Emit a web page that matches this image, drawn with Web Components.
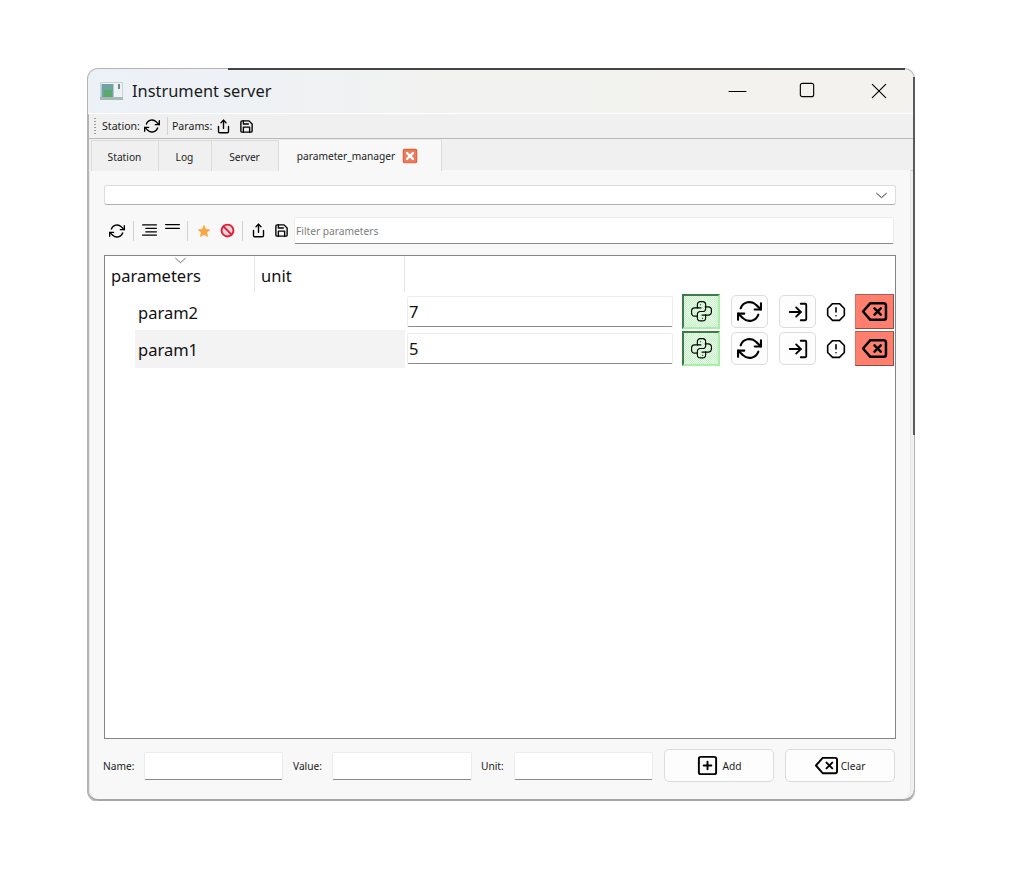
<!DOCTYPE html>
<html>
<head>
<meta charset="utf-8">
<title>Instrument server</title>
<style>
    html, body { margin: 0; background: #fff; }
    body { font-family: "Noto Sans", "Open Sans", sans-serif; padding: 69px 0 0 88px; }
</style>
</head>
<body>
<server-window></server-window>

<script>
(function () {

    const ICONS = {
        refresh: '<polyline points="23 4 23 10 17 10"/><polyline points="1 20 1 14 7 14"/><path d="M3.51 9a9 9 0 0 1 14.85-3.36L23 10M1 14l4.64 4.36A9 9 0 0 0 20.49 15"/>',
        share: '<path d="M4 12v8a2 2 0 0 0 2 2h12a2 2 0 0 0 2-2v-8"/><polyline points="16 6 12 2 8 6"/><line x1="12" y1="2" x2="12" y2="15"/>',
        save: '<path d="M19 21H5a2 2 0 0 1-2-2V5a2 2 0 0 1 2-2h11l5 5v11a2 2 0 0 1-2 2z"/><polyline points="17 21 17 13 7 13 7 21"/><polyline points="7 3 7 8 15 8"/>',
        login: '<path d="M15 3h5a1 1 0 0 1 1 1v16a1 1 0 0 1-1 1h-5"/><polyline points="10 17 15 12 10 7"/><line x1="15" y1="12" x2="3" y2="12"/>',
        alert: '<polygon points="7.86 2 16.14 2 22 7.86 22 16.14 16.14 22 7.86 22 2 16.14 2 7.86"/><line x1="12" y1="7" x2="12" y2="12"/><line x1="12" y1="16.5" x2="12.01" y2="16.5"/>',
        backspace: '<path d="M21 4H8l-7 8 7 8h13a2 2 0 0 0 2-2V6a2 2 0 0 0-2-2z"/><line x1="18" y1="9" x2="12" y2="15"/><line x1="12" y1="9" x2="18" y2="15"/>',
        plus: '<rect x="3" y="3" width="18" height="18" rx="2"/><line x1="12" y1="8" x2="12" y2="16"/><line x1="8" y1="12" x2="16" y2="12"/>',
        python: '<path d="M8.500 8.500H5.500A3 3 0 0 0 2.500 11.500v2A3 3 0 0 0 5.500 16.500h2.500"/><path d="M11.500 8.500H8.500"/><path d="M15.500 7.500h3a3 3 0 0 1 3 3v2a3 3 0 0 1-3 3h-6"/><path d="M8 8.500V5.500A3 3 0 0 1 11 2.500h2A3 3 0 0 1 16 5.500v3.500a3 3 0 0 1-3 3h-2a3 3 0 0 0-3 3v3a3 3 0 0 0 3 3h2a3 3 0 0 0 3-3v-3"/><path d="M11 5.500v.01"/><path d="M13 18.500v.01"/>',
        expand: '<line x1="1" y1="3" x2="23" y2="3"/><line x1="6" y1="8.500" x2="23" y2="8.500"/><line x1="6" y1="14" x2="23" y2="14"/><line x1="1" y1="19.500" x2="23" y2="19.500"/>',
        collapse: '<line x1="1" y1="4" x2="23" y2="4"/><line x1="1" y1="10" x2="23" y2="10"/>',
        chevron: '<polyline points="3 8 12 16 21 8"/>',
        close: '<line x1="2" y1="2" x2="22" y2="22"/><line x1="22" y1="2" x2="2" y2="22"/>',
        minimize: '<line x1="0" y1="12" x2="24" y2="12"/>',
        maximize: '<rect x="2" y="2" width="20" height="20" rx="3"/>',
        star: '<polygon fill="#f9a63f" stroke="#f9a63f" stroke-width="1" points="12 2.500 15 9 22 9.800 16.800 14.500 18.200 21.500 12 18 5.800 21.500 7.200 14.500 2 9.800 9 9"/>',
        forbid: '<circle cx="12" cy="12" r="9.500" fill="#d5d9e2" stroke="#f0182c" stroke-width="3"/><line x1="5.500" y1="5.500" x2="18.500" y2="18.500" stroke="#f0182c" stroke-width="3"/>',
        tabclose: '<rect x="0.500" y="0.500" width="23" height="23" rx="2" fill="#f0795a" stroke="#d9603f"/><line x1="7" y1="7" x2="17" y2="17" stroke="#fff" stroke-width="4"/><line x1="17" y1="7" x2="7" y2="17" stroke="#fff" stroke-width="4"/>'
    };

    class AppIcon extends HTMLElement {
        connectedCallback() {
            const size = this.getAttribute("size") || 16;
            const weight = this.getAttribute("weight") || 2;
            const name = this.getAttribute("name");
            const shadow = this.attachShadow({ mode: 'open' });
            shadow.innerHTML = `
            <style>
                :host { display: inline-flex; flex: none; width: ${size}px; height: ${size}px; }
                svg { width: 100%; height: 100%; display: block; overflow: visible; }
            </style>
            <svg viewBox="0 0 24 24" fill="none" stroke="#000" stroke-width="${weight}"
                 stroke-linecap="round" stroke-linejoin="round">${ICONS[name]}</svg>`;
        }
    }

    class TitleBar extends HTMLElement {
        constructor() {
            super();
            this.attachShadow({ mode: 'open' }).innerHTML = `
            <style>
                :host {
                    display: flex; align-items: center; height: 44px;
                    background: linear-gradient(90deg, #ecf1f8 0, #f2f2f0 45%, #f3f2ee 100%);
                    border-bottom: 1px solid #fff;
                    border-radius: 10px 10px 0 0;
                    color: #1a1a1a;
                }
                .logo { width: 23px; height: 18px; margin: 0 9px 0 12px; flex: none; }
                .title { font-size: 16.400px; flex: 1; white-space: nowrap; padding-bottom: 2px; }
                .buttons { display: flex; align-items: center; margin-right: 27px; }
                .max { margin: -2px 56px 0 53px; }
            </style>
            <svg class="logo" viewBox="0 0 23 18">
                <rect width="23" height="18" fill="#c6d3d6"/>
                <rect x="1" y="1" width="21" height="15" fill="#eef2f2"/>
                <rect x="1.500" y="2" width="12" height="13" fill="#6ea3a3"/>
                <rect x="4" y="8" width="8" height="7" fill="#5aa86e"/>
                <rect x="18" y="2" width="2" height="5" fill="#6a8a8e"/>
                <rect y="15" width="23" height="3" fill="#a9b8b6"/>
            </svg>
            <span class="title"><slot></slot></span>
            <div class="buttons">
                <app-icon name="minimize" size="17" weight="1.500"></app-icon>
                <app-icon class="max" name="maximize" size="16" weight="1.700"></app-icon>
                <app-icon name="close" size="16" weight="1.700"></app-icon>
            </div>`;
        }
    }

    class ToolRow extends HTMLElement {
        constructor() {
            super();
            this.attachShadow({ mode: 'open' }).innerHTML = `
            <style>
                :host { display: flex; align-items: center; font-size: 10.200px; color: #1c1c1c; }
            </style>
            <slot></slot>`;
        }
    }

    class ToolSep extends HTMLElement {
        constructor() {
            super();
            this.attachShadow({ mode: 'open' }).innerHTML = `
            <style>
                :host { display: block; flex: none; width: 1px; height: 20px; background: #d2d2d2; }
            </style>`;
        }
    }

    class TabItem extends HTMLElement {
        constructor() {
            super();
            this.attachShadow({ mode: 'open' }).innerHTML = `
            <style>
                :host {
                    display: flex; align-items: center; justify-content: center; gap: 8px;
                    box-sizing: border-box; height: 31px; margin-top: 1px; padding: 2px 1px 0 0;
                    font-size: 10.200px; color: #1c1c1c;
                    border: 1px solid #dcdcdc; border-bottom: 0; border-left: 0;
                    background: #f0f0f0;
                }
                :host([active]) { height: 32px; margin-top: 0; background: #f8f8f8; border-top: 1px solid #e8e8e8; position: relative; z-index: 1; padding: 0 6px 0 0; }
            </style>
            <slot></slot>`;
        }
    }

    class ParamRow extends HTMLElement {
        constructor() {
            super();
            const name = this.getAttribute("name");
            const value = this.getAttribute("value");
            this.attachShadow({ mode: 'open' }).innerHTML = `
            <style>
                :host { display: flex; height: 37px; font-size: 16.500px; color: #111; }
                .name {
                    box-sizing: border-box; width: 270px; margin-left: 30px; padding: 0 3px;
                    display: flex; align-items: center; flex: none;
                }
                :host([selected]) .name { background: #f3f3f3; margin-top: -1px; }
                .value {
                    box-sizing: border-box; width: 266px; height: 31px; margin: 2px 0 0 2px;
                    padding: 0 1px; display: flex; align-items: center; flex: none;
                    border: 1px solid #ececec; border-bottom: 1px solid #8a8a8a; border-radius: 2px;
                }
                .python {
                    box-sizing: border-box; width: 38px; height: 35px; margin-left: 9px;
                    display: flex; align-items: center; justify-content: center; flex: none;
                    background: repeating-conic-gradient(#b6f8b6 0 25%, #fbfffb 0 50%) 0 0 / 2px 2px;
                    border: 2px solid; border-color: #3f7a4a #a6f0a6 #a6f0a6 #3f7a4a;
                }
                .plain {
                    box-sizing: border-box; width: 37px; height: 33px; margin: 1px 0 0 11px;
                    display: flex; align-items: center; justify-content: center; flex: none;
                    background: #fdfdfd; border: 1px solid #dcdcdc; border-radius: 5px;
                }
                .warn { width: 39px; height: 35px; display: flex; align-items: center; justify-content: center; flex: none; }
                .remove {
                    box-sizing: border-box; width: 39px; height: 35px;
                    display: flex; align-items: center; justify-content: center; flex: none;
                    background: #ff7f6e;
                    border: 1px solid; border-color: #a85f53 #8d4a40 #8d4a40 #e07060;
                }
            </style>
            <div class="name">${name}</div>
            <div class="value">${value}</div>
            <div class="python"><app-icon name="python" size="25" weight="1.100"></app-icon></div>
            <div class="plain"><app-icon name="refresh" size="25" weight="2"></app-icon></div>
            <div class="plain"><app-icon name="login" size="22" weight="2"></app-icon></div>
            <div class="warn"><app-icon name="alert" size="20" weight="1.900"></app-icon></div>
            <div class="remove"><app-icon name="backspace" size="25" weight="2.400"></app-icon></div>`;
        }
    }

    class ParamTree extends HTMLElement {
        constructor() {
            super();
            this.attachShadow({ mode: 'open' }).innerHTML = `
            <style>
                :host {
                    display: block; box-sizing: border-box; height: 484px; margin-top: 11px;
                    background: #fff; border: 1px solid #83838a;
                }
                .head { display: flex; height: 38px; font-size: 16.500px; color: #111; position: relative; }
                .col {
                    box-sizing: border-box; width: 150px; height: 36px; padding: 8px 0 0 6px;
                    border-right: 1px solid #e4e4e4;
                }
                .arrow { position: absolute; left: 69px; top: -2px; }
            </style>
            <div class="head">
                <div class="col">parameters</div>
                <div class="col">unit</div>
                <app-icon class="arrow" name="chevron" size="13" weight="1"></app-icon>
            </div>
            <slot></slot>`;
        }
    }

    class FormField extends HTMLElement {
        constructor() {
            super();
            const label = this.getAttribute("label");
            this.attachShadow({ mode: 'open' }).innerHTML = `
            <style>
                :host { display: flex; align-items: center; justify-content: space-between; font-size: 10.200px; color: #1c1c1c; }
                .box {
                    box-sizing: border-box; height: 28px; background: #fff; flex: none;
                    width: var(--box-width, 139px);
                    border: 1px solid #ececec; border-bottom: 1px solid #8a8a8a; border-radius: 2px;
                }
            </style>
            <span>${label}</span>
            <div class="box"></div>`;
        }
    }

    class FormButton extends HTMLElement {
        constructor() {
            super();
            const icon = this.getAttribute("icon");
            this.attachShadow({ mode: 'open' }).innerHTML = `
            <style>
                :host {
                    display: flex; align-items: center; justify-content: center; gap: 3px;
                    box-sizing: border-box; width: 110px; height: 33px; flex: none;
                    background: #fdfdfd; border: 1px solid #dcdcdc; border-radius: 5px;
                    font-size: 10.200px; color: #1c1c1c;
                }
            </style>
            <app-icon name="${icon}" size="23" weight="2"></app-icon>
            <span><slot></slot></span>`;
        }
    }

    class ServerWindow extends HTMLElement {
        constructor() {
            super();
            this.attachShadow({ mode: 'open' }).innerHTML = `
            <style>
                :host {
                    display: block; position: relative; box-sizing: border-box;
                    width: 826px; height: 732px;
                    background: #f0f0f0; border-radius: 10px;
                    box-shadow: 0 0 0 1px #b4b4b4, inset 1px 0 0 #b4b4b4, inset 0 -2px 0 #a6a6a6;
                }
                .edge-top { position: absolute; left: 140px; right: 9px; top: -1px; height: 2px; background: #444; }
                .edge-right { position: absolute; right: -1px; top: 8px; width: 2px; height: 358px; background: #5a5a5a; }
                .bar { height: 24px; padding-left: 6px; border-bottom: 1px solid #b9b9b9; font-size: 10.600px; }
                .grip { width: 2px; height: 16px; margin-right: 6px; background: repeating-linear-gradient(#9a9a9a 0 1px, transparent 1px 3px); }
                .bar app-icon { margin-left: 4px; }
                .bar tool-sep { margin: 0 4px 0 7px; }
                .tabs { display: flex; height: 32px; padding-left: 3px; box-sizing: border-box; border-bottom: 1px solid #c8c8c8; }
                .pane {
                    box-sizing: border-box; height: 629px; margin: -1px 3px 0 1px; padding: 15px 14px 0 14px;
                    background: #f8f8f8; border: 1px solid #e8e8e8; border-top: 0; border-bottom: 0;
                    border-radius: 0 0 9px 9px;
                }
                .combo {
                    box-sizing: border-box; height: 20px; background: #fff;
                    border: 1px solid #dcdcdc; border-bottom-color: #b0b0b0; border-radius: 3px;
                    display: flex; align-items: center; justify-content: flex-end; padding-right: 7px;
                }
                .tools { height: 27px; margin: 12px 2px 0 0; padding-left: 5px; }
                .filter {
                    flex: 1; box-sizing: border-box; height: 27px; margin-left: 5px; padding-left: 1px;
                    display: flex; align-items: center; color: #7d7d7d; background: #fff;
                    border: 1px solid #ececec; border-bottom: 1px solid #8a8a8a; border-radius: 2px;
                }
                .form { display: flex; align-items: center; margin: 10px 0 0 -1px; height: 33px; }
            </style>
            <div class="edge-top"></div>
            <div class="edge-right"></div>
            <title-bar>Instrument server</title-bar>
            <tool-row class="bar">
                <div class="grip"></div>
                <span>Station:</span>
                <app-icon name="refresh" size="16"></app-icon>
                <tool-sep style="height:18px"></tool-sep>
                <span>Params:</span>
                <app-icon name="share" size="15" style="margin-left:4px" weight="2.200"></app-icon>
                <app-icon name="save" size="15" style="margin-left:8px" weight="2.200"></app-icon>
            </tool-row>
            <div class="tabs">
                <tab-item style="width:68px;border-left:1px solid #dcdcdc">Station</tab-item>
                <tab-item style="width:53px">Log</tab-item>
                <tab-item style="width:67px">Server</tab-item>
                <tab-item style="width:163px" active>parameter_manager <app-icon name="tabclose" size="14"></app-icon></tab-item>
            </div>
            <div class="pane">
                <div class="combo"><app-icon name="chevron" size="13" weight="1.500"></app-icon></div>
                <tool-row class="tools">
                    <app-icon name="refresh" size="16"></app-icon>
                    <tool-sep style="margin:0 8px 0 8px"></tool-sep>
                    <app-icon name="expand" size="15" weight="2"></app-icon>
                    <app-icon name="collapse" size="15" weight="2" style="margin:-3px 0 0 8px"></app-icon>
                    <tool-sep style="margin:0 9px 0 7px"></tool-sep>
                    <app-icon name="star" size="14"></app-icon>
                    <app-icon name="forbid" size="15" style="margin-left:9px"></app-icon>
                    <tool-sep style="margin:0 8px 0 7px"></tool-sep>
                    <app-icon name="share" size="15" weight="2.200"></app-icon>
                    <app-icon name="save" size="15" style="margin-left:8px" weight="2.200"></app-icon>
                    <div class="filter">Filter parameters</div>
                </tool-row>
                <param-tree>
                    <param-row name="param2" value="7"></param-row>
                    <param-row name="param1" value="5" selected></param-row>
                </param-tree>
                <div class="form">
                    <form-field label="Name:" style="width:180px;margin-right:10px"></form-field>
                    <form-field label="Value:" style="width:179px;margin-right:9px;--box-width:140px"></form-field>
                    <form-field label="Unit:" style="width:172px;margin-right:11px"></form-field>
                    <form-button icon="plus" style="margin-right:11px">Add</form-button>
                    <form-button icon="backspace">Clear</form-button>
                </div>
            </div>`;
        }
    }

    customElements.define('app-icon', AppIcon);
    customElements.define('title-bar', TitleBar);
    customElements.define('tool-row', ToolRow);
    customElements.define('tool-sep', ToolSep);
    customElements.define('tab-item', TabItem);
    customElements.define('param-row', ParamRow);
    customElements.define('param-tree', ParamTree);
    customElements.define('form-field', FormField);
    customElements.define('form-button', FormButton);
    customElements.define('server-window', ServerWindow);
})();
</script>
</body>
</html>
